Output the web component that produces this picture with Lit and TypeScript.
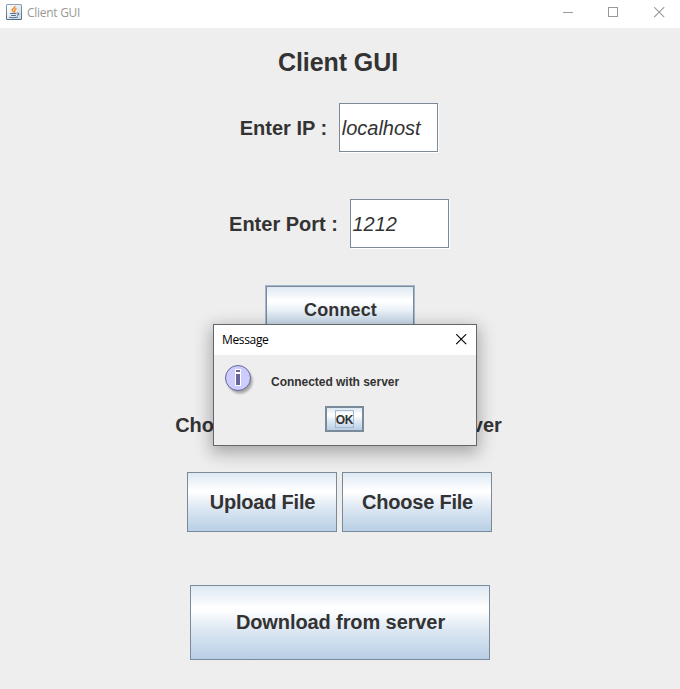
import { LitElement, html, css } from "lit";
import { customElement } from "lit/decorators.js";

@customElement("app-root")
export class AppRoot extends LitElement {
  static styles = css`
    :host {
      display: block;
      position: relative;
      width: 680px;
      height: 689px;
      overflow: hidden;
      background: #eeeeee;
      color: #333333;
      font-family: "Liberation Sans", Arial, sans-serif;
    }
    * { box-sizing: border-box; }
    svg { display: block; flex: none; }
    .titlebar {
      display: flex;
      align-items: center;
      height: 28px;
      padding: 0 15px 4px 6px;
      background: #ffffff;
      color: #999999;
      font: 12px/16px "Open Sans", "Noto Sans", sans-serif;
      letter-spacing: -0.28px;
    }
    .caption { margin: 2px auto 0 5px; }
    .controls { display: flex; gap: 35px; }
    .content {
      display: flex;
      flex-direction: column;
      align-items: center;
      width: 678px;
      font-size: 20px;
      font-weight: bold;
      line-height: 24px;
    }
    .heading {
      margin: 19px 2px 0 0;
      font-size: 25px;
      line-height: 30px;
      letter-spacing: -0.08px;
    }
    .row { display: flex; align-items: center; }
    .ip { margin: 26px 0 0 1px; gap: 12px; }
    .port { margin: 46px 0 0 1px; gap: 12px; }
    .field {
      width: 99px;
      height: 49px;
      margin: 0 1px 1px 0;
      padding: 2px 1.5px 0;
      border: 1px solid #7a8a99;
      background: #ffffff;
      box-shadow: 1px 1px 0 #ffffff;
      font: italic 20px/45px "Liberation Sans", Arial, sans-serif;
      color: #333333;
    }
    .button {
      display: flex;
      align-items: center;
      justify-content: center;
      width: 150px;
      height: 60px;
      padding: 0;
      border: 1px solid #7a8a99;
      background: linear-gradient(#dde8f3 0%, #ffffff 30%, #ffffff 33%, #dde8f3 60%, #b8cfe5 100%);
      color: #333333;
      font: bold 20px/24px "Liberation Sans", Arial, sans-serif;
    }
    .connect {
      height: 50px;
      margin: 36px 0 0 2px;
      padding-left: 1px;
      border-color: #a3b8cc;
      box-shadow: inset 0 0 0 1px #7a8a99;
      font-size: 18px;
      letter-spacing: 0.12px;
    }
    .prompt { margin: 78px 1px 0 0; white-space: nowrap; }
    .files { margin: 35px 0 0 1px; gap: 5px; }
    .files .button { padding-left: 1px; letter-spacing: -0.22px; }
    .download {
      width: 300px;
      height: 75px;
      margin: 53px 0 0 2px;
      padding: 0 0 2px 1px;
      letter-spacing: -0.1px;
    }
    .dialog {
      position: absolute;
      left: 213px;
      top: 324px;
      width: 264px;
      height: 122px;
      border: 1px solid #66666a;
      background: #eeeeee;
      box-shadow: 0 5px 16px 2px rgba(0, 0, 0, 0.3);
    }
    .dialog-title {
      display: flex;
      align-items: center;
      justify-content: space-between;
      height: 30px;
      padding: 0 9px 2px 8px;
      background: #ffffff;
      color: #000000;
      font: 12px/16px "Open Sans", "Noto Sans", sans-serif;
      letter-spacing: -0.35px;
    }
    .dialog-name { margin-top: 2px; }
    .message { display: flex; height: 51px; padding: 8px 0 0 9px; }
    .message-text {
      margin: 11px 0 0 14px;
      font-size: 12px;
      font-weight: bold;
      line-height: 16px;
      letter-spacing: -0.03px;
    }
    .ok {
      width: 39px;
      height: 26px;
      margin-left: 111px;
      border: 2px solid #7a8a99;
      font-size: 12px;
      line-height: 16px;
    }
    .focus {
      display: flex;
      align-items: center;
      justify-content: center;
      width: 19px;
      height: 18px;
      padding-top: 1px;
      border: 1px solid #a3b8cc;
      letter-spacing: -0.3px;
    }
  `;

  private close(color: string) {
    return html`<svg width="11" height="11" viewBox="0 0 11 11">
      <path d="M.2 .2l10 10M10.200 .2l-10 10" fill="none" stroke=${color} stroke-width="1.1" />
    </svg>`;
  }

  render() {
    return html`
      <div class="titlebar">
        <svg width="16" height="16" viewBox="0 0 16 16">
          <defs>
            <linearGradient id="jb" x1="0" y1="0" x2="0" y2="1">
              <stop offset="0" stop-color="#8fa3b4" />
              <stop offset="1" stop-color="#4a6a86" />
            </linearGradient>
            <linearGradient id="jf" x1="0" y1="0" x2="1" y2="1">
              <stop offset="0" stop-color="#ffffff" />
              <stop offset="1" stop-color="#cfd9e2" />
            </linearGradient>
          </defs>
          <rect x=".5" y=".5" width="15" height="15" rx=".5" fill="url(#jf)" stroke="url(#jb)" />
          <path d="M9 2C9.500 4 5.800 4.500 6.200 6.200C6.500 7.300 7.800 7.500 7.500 8.500M10.500 4.500C7.800 5.500 9.500 6.500 8.200 8.500" fill="none" stroke="#ee8a2c" stroke-width="1.500" />
          <path d="M4 9.500H10.500M5 11.500H10M3 13.300Q7.500 14.300 12 13M11 9C13.800 8.500 13 11 11 11.300" fill="none" stroke="#527596" stroke-width="1.100" />
        </svg>
        <span class="caption">Client GUI</span>
        <div class="controls">
          <svg width="11" height="11" viewBox="0 0 11 11"><path d="M1 5.500H11" stroke="#999" /></svg>
          <svg width="11" height="11" viewBox="0 0 11 11"><rect x=".5" y=".5" width="9" height="9" fill="none" stroke="#999" /></svg>
          ${this.close("#999999")}
        </div>
      </div>
      <div class="content">
        <h1 class="heading">Client GUI</h1>
        <div class="row ip"><span>Enter IP :</span><input class="field" .value=${"localhost"} /></div>
        <div class="row port"><span>Enter Port :</span><input class="field" .value=${"1212"} /></div>
        <button class="button connect">Connect</button>
        <div class="prompt">Choose a file to send to the server</div>
        <div class="row files">
          <button class="button">Upload File</button>
          <button class="button">Choose File</button>
        </div>
        <button class="button download">Download from server</button>
      </div>
      <div class="dialog">
        <div class="dialog-title"><span class="dialog-name">Message</span>${this.close("#000000")}</div>
        <div class="message">
          <svg width="34" height="34" viewBox="0 0 34 34">
            <defs><filter id="soft"><feGaussianBlur stdDeviation="1.300" /></filter></defs>
            <circle cx="17" cy="18" r="12.500" fill="#777" opacity=".6" filter="url(#soft)" />
            <circle cx="15" cy="15" r="12.500" fill="#ccccff" stroke="#666699" />
            <path d="M12 6h6v17h-6z" fill="#ffffff" />
            <path d="M13 7h4v2h-4zM13 11h4v11h-4z" fill="#666699" />
          </svg>
          <span class="message-text">Connected with server</span>
        </div>
        <button class="button ok"><span class="focus">OK</span></button>
      </div>
    `;
  }
}
